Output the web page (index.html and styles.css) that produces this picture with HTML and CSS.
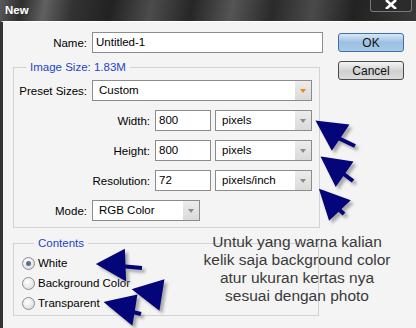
FILE: index.html
```html
<!DOCTYPE html>
<html>
<head>
    <title>New</title>
    <meta name="viewport" content="width=device-width, initial-scale=1.0">
    <link rel="stylesheet" href="styles.css">
</head>
<body>
    <div class="janela">
        <div class="titulo">
            <span class="titulo-texto">New</span>
            <span class="fechar">
                <svg width="14" height="9" viewBox="0 0 14 9"><path d="M2 0 L12 9 M12 0 L2 9" stroke="#fff" stroke-width="2.6"/></svg>
            </span>
        </div>

        <div class="corpo">
            <div class="formulario">
                <div class="linha">
                    <label class="rotulo">Name:</label>
                    <div class="campo nome">Untitled-1</div>
                </div>

                <fieldset class="grupo tamanho">
                    <legend>Image Size: 1.83M</legend>
                    <div class="linha">
                        <label class="rotulo">Preset Sizes:</label>
                        <div class="caixa preset">Custom<span class="seta laranja"></span></div>
                    </div>
                    <div class="linha">
                        <label class="rotulo largo">Width:</label>
                        <div class="campo numero">800</div>
                        <div class="caixa unidade">pixels<span class="seta"></span></div>
                    </div>
                    <div class="linha">
                        <label class="rotulo largo">Height:</label>
                        <div class="campo numero">800</div>
                        <div class="caixa unidade">pixels<span class="seta"></span></div>
                    </div>
                    <div class="linha">
                        <label class="rotulo largo">Resolution:</label>
                        <div class="campo numero">72</div>
                        <div class="caixa unidade">pixels/inch<span class="seta"></span></div>
                    </div>
                    <div class="linha">
                        <label class="rotulo">Mode:</label>
                        <div class="caixa modo">RGB Color<span class="seta"></span></div>
                    </div>
                </fieldset>

                <fieldset class="grupo conteudo">
                    <legend>Contents</legend>
                    <div class="opcao"><span class="radio marcado"></span>White</div>
                    <div class="opcao"><span class="radio"></span>Background Color</div>
                    <div class="opcao"><span class="radio"></span>Transparent</div>
                </fieldset>
            </div>

            <div class="botoes">
                <button class="ok">OK</button>
                <button class="cancelar">Cancel</button>
            </div>
        </div>

        <!-- anotação por cima do diálogo -->
        <p class="nota">Untuk yang warna kalian<br>kelik saja background color<br>atur ukuran kertas nya<br>sesuai dengan photo</p>

        <svg class="setas" width="416" height="328" viewBox="0 0 416 328">
            <defs>
                <filter id="sombra" x="-30%" y="-30%" width="160%" height="160%">
                    <feGaussianBlur stdDeviation="1.6"/>
                </filter>
                <g id="flechas">
                    <polygon points="319,123 346,126 332,147"/>
                    <line x1="336" y1="137" x2="355" y2="146"/>
                    <polygon points="324,159 350,163 336,183"/>
                    <line x1="341" y1="172" x2="353" y2="181"/>
                    <polygon points="322,192 347,201 330,217"/>
                    <line x1="335" y1="206" x2="344" y2="214"/>
                    <polygon points="100,264 123,252 124,278"/>
                    <line x1="120" y1="266" x2="142" y2="268"/>
                    <polygon points="136,290 162,282 158,307"/>
                    <polygon points="108,303 135,297 131,322"/>
                    <line x1="124" y1="310" x2="141" y2="314"/>
                </g>
            </defs>
            <g transform="translate(3,3)" fill="#777" stroke="#777" stroke-width="4" opacity="0.6" filter="url(#sombra)">
                <use href="#flechas"/>
            </g>
            <g fill="#05057a" stroke="#05057a" stroke-width="4">
                <use href="#flechas"/>
            </g>
        </svg>
    </div>
</body>
</html>
```

FILE: styles.css
```css
body {
    margin: 0;
    background: #222;
    font-family: "Liberation Sans", Arial, sans-serif;
}
.janela {
    position: relative; /* para as setas e a nota */
    width: 416px;
    height: 328px;
    overflow: hidden;
    background: #f4f4f4;
}
.titulo {
    height: 21px;
    display: flex;
    justify-content: space-between;
    align-items: flex-start;
    background: linear-gradient(100deg, #5a5a5a 0px, #2e2e2e 22px, #606060 45px, #333 72px, #222 110px, #4c4c4c 150px, #262626 190px, #555 230px, #2a2a2a 270px, #4a4a4a 310px, #222 350px, #3a3a3a 416px);
}
.titulo-texto {
    color: #fff;
    font-weight: bold;
    font-size: 11.5px;
    margin: 4px 0 0 5px;
    text-shadow: 1px 1px 0 #333, -1px 0 0 #555;
}
.fechar {
    width: 40px;
    height: 11px;
    margin-right: 4px;
    display: flex;
    justify-content: center;
    align-items: flex-start;
    background: #2b2b2b;
    border: 1px solid #7a7a7a;
    border-top: none;
    border-radius: 0 0 3px 3px;
}
.corpo {
    display: flex;
    border-left: 3px solid #333;
    border-top: 1px solid #fff;
    height: 306px;
}
.formulario {
    width: 306px;
    padding: 10px 0 0 10px;
}
.linha {
    display: flex;
    align-items: center;
    gap: 5px;
    height: 21px;
}
.rotulo {
    width: 73px;
    text-align: right;
    font-size: 11.5px;
    color: #000;
    flex-shrink: 0;
}
.formulario > .linha .rotulo {
    width: 74px;
}
.rotulo.largo {
    width: 136px;
}
.campo, .caixa {
    position: relative;
    height: 19px;
    line-height: 19px;
    border: 1px solid #8c8c8c;
    background: #fff;
    font-size: 11.5px;
    color: #000;
    box-sizing: content-box;
    flex-shrink: 0;
}
.campo {
    padding-left: 3px;
}
.caixa {
    padding-left: 6px;
}
.nome {
    width: 226px;
}
.numero {
    width: 51px;
}
.preset {
    width: 212px;
}
.unidade {
    width: 89px;
    margin-left: -1px;
}
.modo {
    width: 100px;
}
.seta {
    position: absolute;
    top: 0;
    right: 0;
    width: 16px;
    height: 19px;
    background: linear-gradient(#ececec, #dadada);
}
.seta::after {
    content: "";
    position: absolute;
    left: 5px;
    top: 8px;
    border-left: 3px solid transparent;
    border-right: 3px solid transparent;
    border-top: 4px solid #8a8a8a;
}
.seta.laranja::after {
    border-top-color: #f08a10;
}
.grupo {
    margin: 0;
    border: 1px solid #d2d2d2;
    min-width: 0;
}
.grupo legend {
    color: #1f45c8;
    font-size: 11.5px;
    padding: 0 4px;
    margin-left: 12px;
    line-height: 14px;
}
.tamanho {
    width: 305px;
    margin-top: 7px;
    padding: 6px 0 6px 0;
    display: flex;
    flex-direction: column;
    gap: 9px;
}
.conteudo {
    width: 296px;
    margin-top: 8px;
    padding: 3px 0 2px 8px;
}
.opcao {
    display: flex;
    align-items: center;
    gap: 3px;
    height: 20px;
    font-size: 11.5px;
    color: #000;
}
.radio {
    width: 11px;
    height: 11px;
    border: 1px solid #8e8e8e;
    border-radius: 50%;
    background: radial-gradient(circle at 40% 35%, #fff, #d6d6d6);
    display: flex;
    justify-content: center;
    align-items: center;
}
.radio.marcado::after {
    content: "";
    width: 5px;
    height: 5px;
    border-radius: 50%;
    background: #5a7090;
}
.botoes {
    margin-left: 19px;
    padding-top: 11px;
    display: flex;
    flex-direction: column;
    gap: 9px;
}
.botoes button {
    width: 66px;
    height: 19px;
    padding: 0;
    font-family: "Liberation Sans", Arial, sans-serif;
    font-size: 12px;
    color: #111;
    border-radius: 3px;
}
.ok {
    border: 1px solid #3f6fa8;
    background: linear-gradient(#d8e8f6, #9cc0e2 50%, #a8cae8);
}
.cancelar {
    border: 1px solid #4a4a4a;
    background: linear-gradient(#f4f4f4, #d0d0d0 55%, #dcdcdc);
}
.nota {
    position: absolute;
    left: 197px;
    top: 233px;
    width: 200px;
    margin: 0;
    text-align: center;
    font-size: 15.5px;
    line-height: 18px;
    color: #3a3a3a;
}
.setas {
    position: absolute;
    top: 0;
    left: 0;
    pointer-events: none;
}
```
